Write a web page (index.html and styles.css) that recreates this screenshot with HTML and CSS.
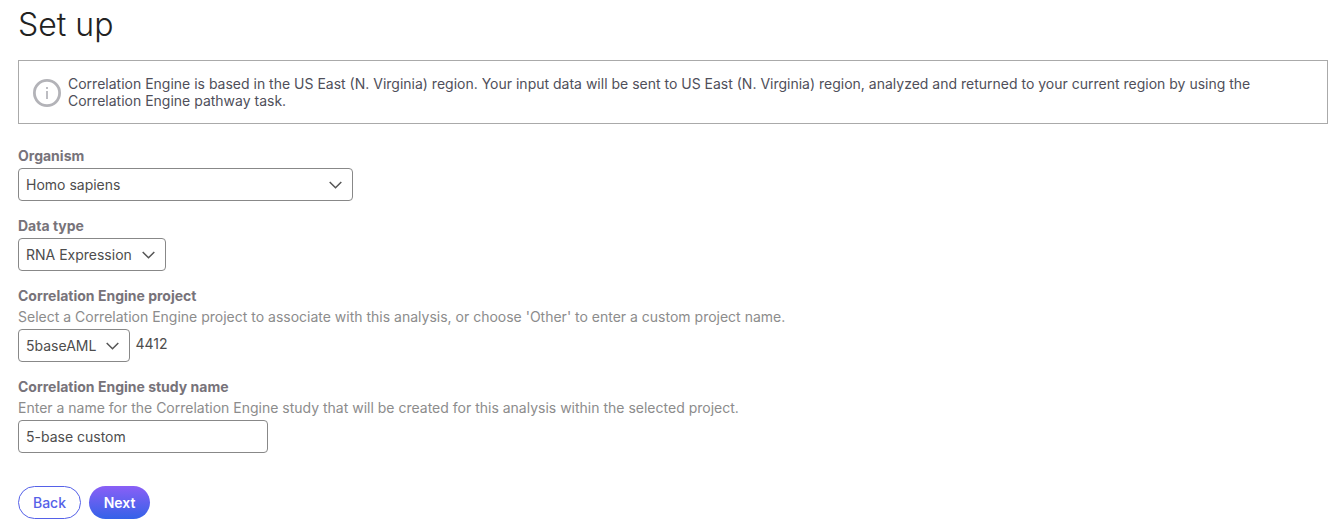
FILE: index.html
```html
<!DOCTYPE html>
<html lang="en">
<head>
  <meta charset="UTF-8" />
  <title>Set up</title>
  <link rel="stylesheet" href="styles.css">
</head>
<body>

  <h1 class="page-title">Set up</h1>

  <div class="notice">
    <svg class="notice-icon" width="28" height="28" viewBox="0 0 28 28" aria-hidden="true">
      <circle cx="14" cy="14" r="12.6" fill="none" stroke="#b3b3b8" stroke-width="2.8" />
      <rect x="13" y="12" width="2" height="8" fill="#bdbdc2" />
      <rect x="13" y="8" width="2" height="2" fill="#bdbdc2" />
    </svg>
    <p class="notice-text">Correlation Engine is based in the US East (N. Virginia) region. Your input data will be sent to US East (N. Virginia) region, analyzed and returned to your current region by using the Correlation Engine pathway task.</p>
  </div>

  <div class="field field-organism">
    <div class="field-label">Organism</div>
    <div class="select select-organism">
      <span>Homo sapiens</span>
      <svg class="chevron" width="13" height="8" viewBox="0 0 13 8"><path d="M.7 1l5.8 5.8L12.3 1" /></svg>
    </div>
  </div>

  <div class="field">
    <div class="field-label">Data type</div>
    <div class="select">
      <span>RNA Expression</span>
      <svg class="chevron" width="13" height="8" viewBox="0 0 13 8"><path d="M.7 1l5.8 5.8L12.3 1" /></svg>
    </div>
  </div>

  <div class="field">
    <div class="field-label">Correlation Engine project</div>
    <div class="field-hint">Select a Correlation Engine project to associate with this analysis, or choose 'Other' to enter a custom project name.</div>
    <div class="project-row">
      <div class="select">
        <span>5baseAML</span>
        <svg class="chevron" width="13" height="8" viewBox="0 0 13 8"><path d="M.7 1l5.8 5.8L12.3 1" /></svg>
      </div>
      <span class="project-id">4412</span>
    </div>
  </div>

  <div class="field">
    <div class="field-label">Correlation Engine study name</div>
    <div class="field-hint">Enter a name for the Correlation Engine study that will be created for this analysis within the selected project.</div>
    <div class="text-input">5-base custom</div>
  </div>

  <div class="actions">
    <button class="btn btn-back" type="button">Back</button>
    <button class="btn btn-next" type="button">Next</button>
  </div>

</body>
</html>
```

FILE: styles.css
```css
body {
  margin: 0;
  padding: 0 11px 0 18px;
  background: #fff;
  color: #4d4d4d;
  font-family: Inter, "Liberation Sans", sans-serif;
  font-size: 14px;
  line-height: 17px;
}

.page-title {
  margin: 0;
  padding-top: 6px;
  height: 60px;
  box-sizing: border-box;
  font-size: 32px;
  line-height: 38px;
  font-weight: 300;
  color: #222;
}

/* info box */
.notice {
  display: flex;
  align-items: center;
  height: 64px;
  box-sizing: border-box;
  border: 1px solid #aaa;
  padding: 0 14px;
}
.notice-icon {
  flex: none;
  margin-right: 7px;
  margin-top: 1px;
}
.notice-text {
  margin: 0;
  color: #4f4f5a;
}

.field {
  margin-top: 16px;
}
.field-organism {
  margin-top: 23px;
}
.field-label {
  font-weight: 700;
  color: #77737a;
  margin-bottom: 4px;
}
.field-hint {
  color: #8c8c8c;
  margin-top: 3px;
  margin-bottom: 4px;
}

.select {
  display: inline-flex;
  align-items: center;
  justify-content: space-between;
  height: 33px;
  box-sizing: border-box;
  padding: 0 10px 0 7px;
  border: 1px solid #888;
  border-radius: 4px;
  background: #fff;
  vertical-align: top;
}
.select span {
  margin-right: 10px;
}
.select-organism {
  display: flex;
  width: 335px;
}
.chevron {
  flex: none;
}
.chevron path {
  fill: none;
  stroke: #555;
  stroke-width: 1.5;
}

.project-row {
  display: flex;
  align-items: flex-start;
}
.project-id {
  margin-left: 5px;
  margin-top: 6px;
}

.text-input {
  width: 250px;
  height: 33px;
  box-sizing: border-box;
  padding: 0 7px;
  border: 1px solid #888;
  border-radius: 4px;
  line-height: 32px;
}

.actions {
  display: flex;
  gap: 8px;
  margin-top: 33px;
}
.btn {
  height: 33px;
  padding: 0;
  border-radius: 17px;
  font-family: inherit;
  font-size: 14px;
  cursor: pointer;
}
.btn-back {
  width: 63px;
  border: 1px solid #5561e8;
  background: #fff;
  color: #5561e8;
  font-weight: 500;
}
.btn-next {
  width: 61px;
  border: 0;
  background: linear-gradient(#8a5ff6, #3462e8);
  color: #fff;
  font-weight: 600;
}
```
